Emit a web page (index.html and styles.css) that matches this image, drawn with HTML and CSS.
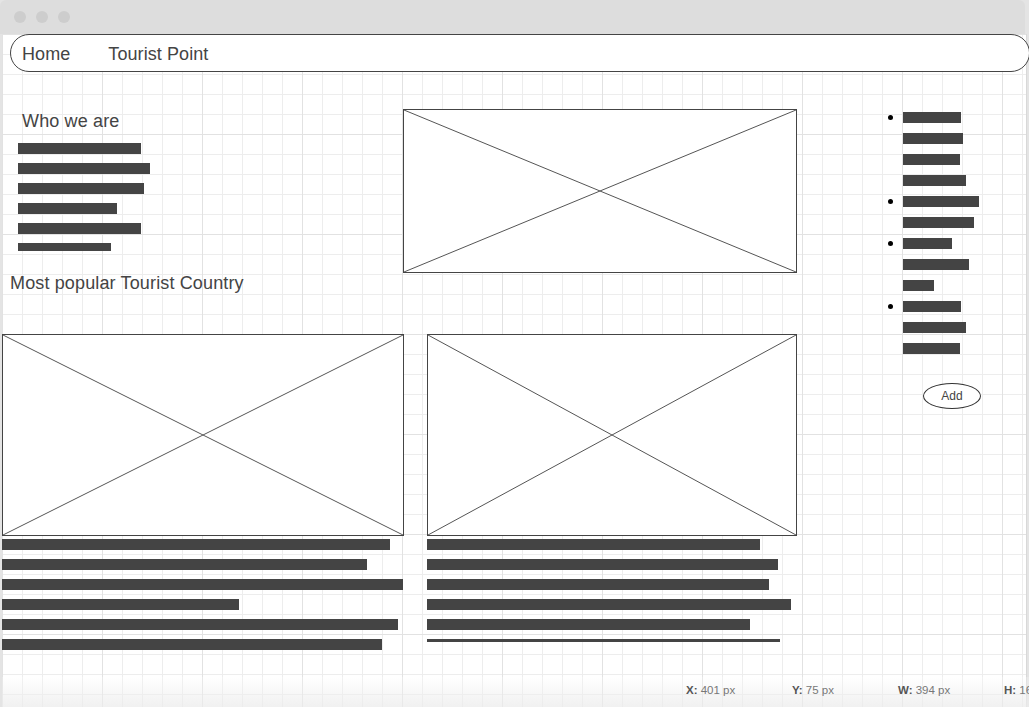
FILE: index.html
```html
<!DOCTYPE html>
<html lang="en">
<head>
<meta charset="utf-8">
<title>Tourist Point wireframe</title>
<link rel="stylesheet" href="styles.css">
</head>
<body>
<div class="window">
  <div class="titlebar">
    <span class="dot-btn"></span><span class="dot-btn"></span><span class="dot-btn"></span>
  </div>
  <div class="canvas">
    <nav class="nav">
      <span class="nav-item">Home</span>
      <span class="nav-item">Tourist Point</span>
    </nav>
    <div class="content">
      <div class="main">
        <div class="top-row">
          <div class="intro">
            <h2 class="heading heading-who">Who we are</h2>
            <div class="bars bars-intro">
              <div class="bar" style="width:123px"></div>
              <div class="bar" style="width:132px"></div>
              <div class="bar" style="width:126px"></div>
              <div class="bar" style="width:99px"></div>
              <div class="bar" style="width:123px"></div>
              <div class="bar bar-thin" style="width:93px"></div>
            </div>
            <h2 class="heading heading-popular">Most popular Tourist Country</h2>
          </div>
          <div class="placeholder hero">
            <svg class="cross" viewBox="0 0 100 100" preserveAspectRatio="none"><line x1="0" y1="0" x2="100" y2="100"/><line x1="100" y1="0" x2="0" y2="100"/></svg>
          </div>
        </div>
        <div class="bottom-row">
          <div class="card card-wide">
            <div class="placeholder card-image">
              <svg class="cross" viewBox="0 0 100 100" preserveAspectRatio="none"><line x1="0" y1="0" x2="100" y2="100"/><line x1="100" y1="0" x2="0" y2="100"/></svg>
            </div>
            <div class="bars bars-card">
              <div class="bar" style="width:388px"></div>
              <div class="bar" style="width:365px"></div>
              <div class="bar" style="width:401px"></div>
              <div class="bar" style="width:237px"></div>
              <div class="bar" style="width:396px"></div>
              <div class="bar" style="width:380px"></div>
            </div>
          </div>
          <div class="card card-narrow">
            <div class="placeholder card-image">
              <svg class="cross" viewBox="0 0 100 100" preserveAspectRatio="none"><line x1="0" y1="0" x2="100" y2="100"/><line x1="100" y1="0" x2="0" y2="100"/></svg>
            </div>
            <div class="bars bars-card">
              <div class="bar" style="width:333px"></div>
              <div class="bar" style="width:351px"></div>
              <div class="bar" style="width:342px"></div>
              <div class="bar" style="width:364px"></div>
              <div class="bar" style="width:323px"></div>
              <div class="bar bar-line" style="width:353px"></div>
            </div>
          </div>
        </div>
      </div>
      <aside class="aside">
        <ul class="list">
          <li class="list-item"><span class="bullet"></span><div class="bars bars-list">
            <div class="bar" style="width:58px"></div>
            <div class="bar" style="width:60px"></div>
            <div class="bar" style="width:57px"></div>
            <div class="bar" style="width:63px"></div>
          </div></li>
          <li class="list-item"><span class="bullet"></span><div class="bars bars-list">
            <div class="bar" style="width:76px"></div>
            <div class="bar" style="width:71px"></div>
          </div></li>
          <li class="list-item"><span class="bullet"></span><div class="bars bars-list">
            <div class="bar" style="width:49px"></div>
            <div class="bar" style="width:66px"></div>
            <div class="bar" style="width:31px"></div>
          </div></li>
          <li class="list-item"><span class="bullet"></span><div class="bars bars-list">
            <div class="bar" style="width:58px"></div>
            <div class="bar" style="width:63px"></div>
            <div class="bar" style="width:57px"></div>
          </div></li>
        </ul>
        <button class="add-btn" type="button">Add</button>
      </aside>
    </div>
    <div class="status">
      <span class="status-item"><b>X:</b> 401 px</span>
      <span class="status-item"><b>Y:</b> 75 px</span>
      <span class="status-item"><b>W:</b> 394 px</span>
      <span class="status-item status-last"><b>H:</b> 164 px</span>
    </div>
  </div>
</div>
</body>
</html>
```

FILE: styles.css
```css
* { box-sizing: border-box; }

html, body {
  margin: 0;
  padding: 0;
  width: 1029px;
  height: 707px;
  overflow: hidden;
  background: #eeeeee;
  font-family: "Liberation Sans", Arial, sans-serif;
}

.window {
  width: 1029px;
  height: 707px;
  display: flex;
  flex-direction: column;
  background: #e4e4e4;
}

.titlebar {
  height: 34px;
  width: 1025px;
  flex: none;
  background: #dddddd;
  border-radius: 6px 6px 0 0;
  display: flex;
  align-items: center;
  gap: 10px;
  padding: 0 0 0 14px;
}

.dot-btn {
  width: 12px;
  height: 12px;
  border-radius: 50%;
  background: #cdcdcd;
}

.canvas {
  position: relative;
  flex: 1;
  margin-left: 2px;
  width: 1025px;
  background-color: #ffffff;
  background-image:
    linear-gradient(to right, #e2e2e2 1px, transparent 1px),
    linear-gradient(to bottom, #e2e2e2 1px, transparent 1px),
    linear-gradient(to right, #ededed 1px, transparent 1px),
    linear-gradient(to bottom, #ededed 1px, transparent 1px);
  background-size: 100px 100px, 100px 100px, 20px 20px, 20px 20px;
  border-right: 1px solid #d8d8d8;
}

.nav {
  margin-left: 8px;
  width: 1020px;
  height: 38px;
  flex: none;
  border: 1px solid #444444;
  border-radius: 19px;
  background: #ffffff;
  display: flex;
  align-items: center;
  gap: 38px;
  padding: 2px 0 0 11px;
  position: relative;
  z-index: 1;
}

.nav-item {
  font-size: 18px;
  line-height: 21px;
  color: #444444;
  letter-spacing: 0.08px;
}

.content {
  display: flex;
}

.main {
  width: 795px;
  flex: none;
}

.top-row {
  display: flex;
  align-items: flex-start;
}

.intro {
  width: 401px;
  flex: none;
}

.heading {
  margin: 0;
  font-size: 18px;
  line-height: 21px;
  font-weight: normal;
  color: #444444;
  white-space: nowrap;
  letter-spacing: 0.14px;
}

.heading-who {
  margin: 39px 0 0 20px;
}

.heading-popular {
  margin: 22px 0 0 8px;
}

.bars {
  display: flex;
  flex-direction: column;
  align-items: flex-start;
}

.bar {
  height: 11px;
  background: #444444;
  flex: none;
}

.bars-intro {
  margin: 11px 0 0 16px;
  gap: 9px;
}

.bar-thin { height: 8px; }

.placeholder {
  border: 1px solid #444444;
  background: #ffffff;
  position: relative;
}

.cross {
  display: block;
  width: 100%;
  height: 100%;
}

.cross line {
  stroke: #555555;
  stroke-width: 1;
  vector-effect: non-scaling-stroke;
}

.hero {
  width: 394px;
  height: 164px;
  margin-top: 37px;
  flex: none;
}

.bottom-row {
  display: flex;
  gap: 23px;
  margin-top: 40px;
}

.card-wide { width: 402px; }
.card-narrow { width: 370px; }

.card-image {
  width: 100%;
  height: 202px;
}

.bars-card {
  margin-top: 3px;
  gap: 9px;
}

.bar-line { height: 3px; }

.aside {
  margin-left: 88px;
  padding-top: 40px;
  display: flex;
  flex-direction: column;
  align-items: flex-start;
}

.list {
  list-style: none;
  margin: 0;
  padding: 0;
  display: flex;
  flex-direction: column;
  gap: 10px;
}

.list-item {
  display: flex;
  align-items: flex-start;
}

.bullet {
  width: 5px;
  height: 5px;
  border-radius: 50%;
  background: #000000;
  margin: 3px 10px 0 3px;
  flex: none;
}

.bars-list {
  gap: 10px;
}

.add-btn {
  margin: 29px 0 0 38px;
  width: 58px;
  height: 26px;
  border: 1px solid #333333;
  border-radius: 50%;
  background: #ffffff;
  font-family: "Liberation Sans", Arial, sans-serif;
  font-size: 12px;
  color: #444444;
  padding: 0;
  line-height: 24px;
}

.status {
  position: absolute;
  left: 0;
  right: -3px;
  bottom: 0;
  height: 30px;
  display: flex;
  align-items: flex-start;
  padding: 7px 0 0 684px;
  background: linear-gradient(to bottom, rgba(255,255,255,0.2), rgba(236,236,236,0.75));
  white-space: nowrap;
}

.status-item {
  width: 106px;
  flex: none;
  font-size: 11.5px;
  line-height: 13px;
  color: #777777;
}

.status-last {
  width: auto;
}

.status-item b {
  color: #555555;
}
```
